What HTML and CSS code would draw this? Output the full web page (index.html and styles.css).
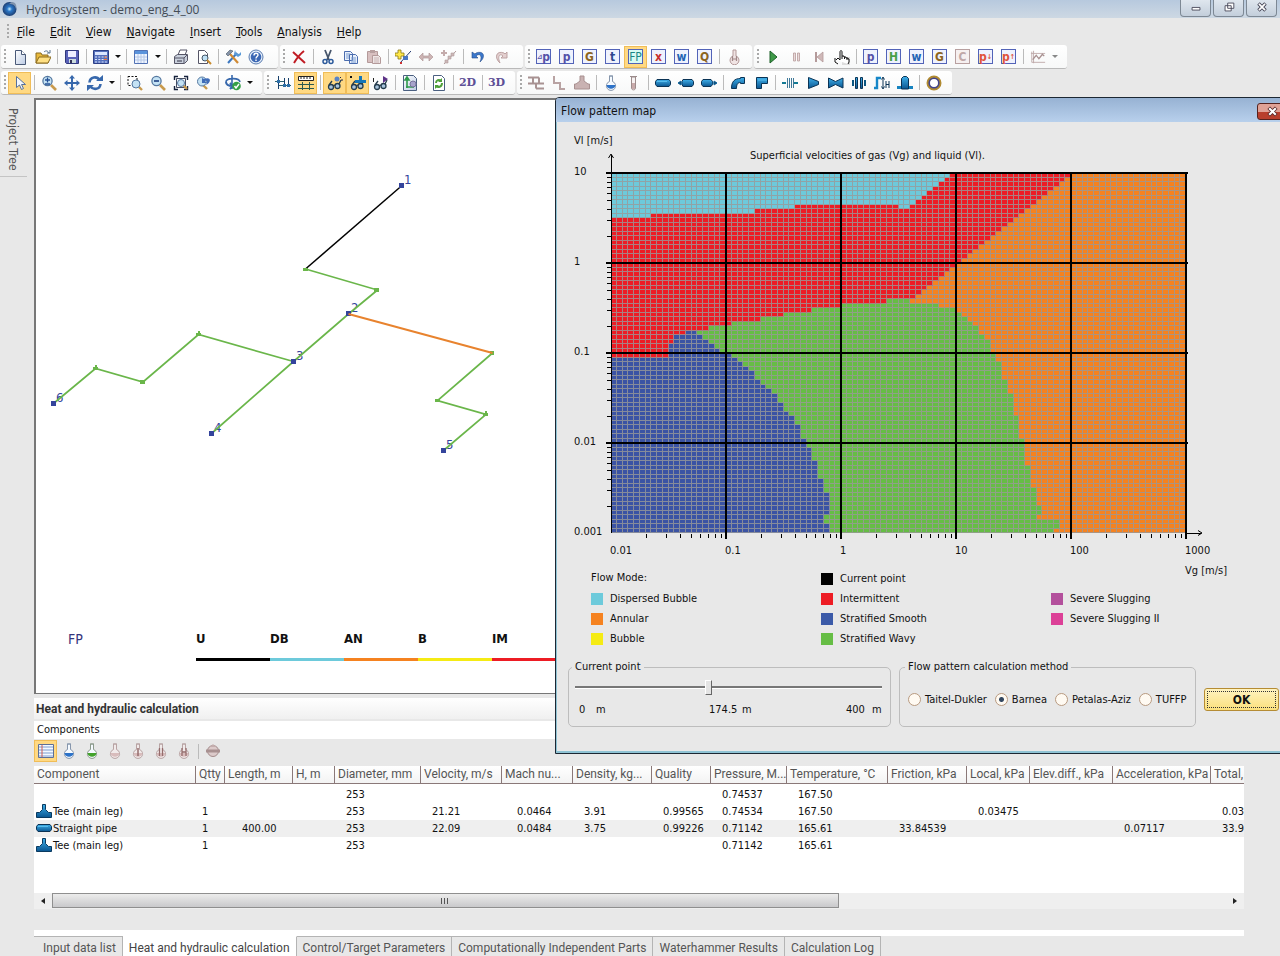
FILE: index.html
```html
<!DOCTYPE html>
<html lang="en">
<head>
    <meta charset="UTF-8">
    <meta name="viewport" content="width=device-width, initial-scale=1.0">
    <title>Hydrosystem - demo_eng_4_00</title>
    <link rel="stylesheet" href="styles.css">
</head>
<body>
    <!-- ICON SPRITE -->
    <svg class="sprite" aria-hidden="true">
        <defs>
            <linearGradient id="g-pipe" x1="0" y1="0" x2="0" y2="1"><stop offset="0" stop-color="#3fb0ea"/><stop offset="1" stop-color="#0a5590"/></linearGradient>
            <linearGradient id="g-sheet" x1="0" y1="0" x2="1" y2="1"><stop offset="0" stop-color="#ffffff"/><stop offset="1" stop-color="#bccbe4"/></linearGradient>
            <radialGradient id="g-globe"><stop offset="0" stop-color="#c8f0ff"/><stop offset=".35" stop-color="#2b78c8"/><stop offset="1" stop-color="#1d3f73"/></radialGradient>
        </defs>
        <symbol id="new" viewBox="0 0 16 16"><path d="M3.5 1.500h6l4 4v10h-10z" fill="url(#g-sheet)" stroke="#4a5a78"/><path d="M9.500 1.500v4h4" fill="#fff" stroke="#4a5a78"/></symbol>
        <symbol id="open" viewBox="0 0 16 16"><path d="M1 4h5l1 2h6v8H1z" fill="#e8b93c" stroke="#8a6a1e"/><path d="M1 14l3-6h12l-3 6z" fill="#ffe083" stroke="#8a6a1e"/><path d="M9 3c2-2 4-1 5 1m1-3v3h-3" fill="none" stroke="#54708c"/></symbol>
        <symbol id="save" viewBox="0 0 16 16"><path d="M1.500 1.500h13v13h-12l-1-1z" fill="#5a62b8" stroke="#30387c"/><path d="M4 2h8v6H4z" fill="#eef"/><path d="M5 10h7v4H5z" fill="#cdd"/><path d="M6 11h2v3H6z" fill="#335"/></symbol>
        <symbol id="calc" viewBox="0 0 16 16"><path d="M.5 1.500h15v13H.5z" fill="#5570bc" stroke="#2c3f86"/><path d="M2 3h12v3H2z" fill="#dbe6ff"/><path d="M2 8h12M2 10.500h12M2 13h12" stroke="#dbe6ff" stroke-dasharray="2 1.300"/><path d="M11 8h3M11 10.500h3" stroke="#f07840"/></symbol>
        <symbol id="grid" viewBox="0 0 16 16"><path d="M1.500 1.500h13v13h-13z" fill="#eef4ff" stroke="#5272b4"/><path d="M2 2h12v3H2z" fill="#5b94dc"/><path d="M2 8h12M2 11h12M5 5v9M8 5v9M11 5v9" stroke="#b6c8e6"/></symbol>
        <symbol id="print" viewBox="0 0 16 16"><path d="M5 6l2-5h7l-2 5" fill="#fff" stroke="#556"/><path d="M1.500 7.500l3-2h10v6l-3 3h-10z" fill="#c9d0dc" stroke="#556"/><path d="M2 9h9v5M11 9l3-3" fill="none" stroke="#556"/><path d="M4 12h5" stroke="#334"/></symbol>
        <symbol id="preview" viewBox="0 0 16 16"><path d="M2.500 1.500h6l3 3v10h-9z" fill="#fff" stroke="#556"/><circle cx="9" cy="9" r="3" fill="#bfe0f4" stroke="#456"/><path d="M11 11l4 4" stroke="#c88a2c" stroke-width="2"/></symbol>
        <symbol id="tools" viewBox="0 0 16 16"><path d="M3 14L12 4" stroke="#3c78c0" stroke-width="2"/><path d="M10 1l1 3 3 1 2-2v3l-3 2-4-3z" fill="#5a9ad8"/><path d="M5 5l8 9" stroke="#d08a34" stroke-width="2.200"/><path d="M1 5l4-4 3 1-5 5z" fill="#8794a8" stroke="#456" stroke-width=".6"/></symbol>
        <symbol id="help" viewBox="0 0 16 16"><circle cx="8" cy="8" r="7" fill="#e6effa" stroke="#5a7cb0"/><circle cx="8" cy="8" r="5.300" fill="#3c68b4"/><path d="M6 6.500c0-3 4-3 4-.5C10 7.500 8 7.500 8 9.500M8 10.500v1.500" fill="none" stroke="#fff" stroke-width="1.400"/></symbol>
        <symbol id="delete" viewBox="0 0 16 16"><path d="M2 3l12 11M13 2C9 5 6 9 3 14" fill="none" stroke="#c01c24" stroke-width="2"/></symbol>
        <symbol id="cut" viewBox="0 0 16 16"><path d="M5 1l4 10M11 1L7 11" stroke="#47566c" stroke-width="1.800"/><circle cx="5" cy="12.500" r="2" fill="none" stroke="#2c5a9c" stroke-width="1.500"/><circle cx="11" cy="12.500" r="2" fill="none" stroke="#2c5a9c" stroke-width="1.500"/></symbol>
        <symbol id="copy" viewBox="0 0 16 16"><path d="M1.500 2.500h6l2 2v7h-8zM6.500 5.500h6l2 2v7h-8z" fill="#e8f0fc" stroke="#4a6cae"/><path d="M8 9h5M8 11h5M8 13h5M3 5h4M3 7h3M3 9h3" stroke="#7a9cd0"/></symbol>
        <symbol id="paste" viewBox="0 0 16 16"><path d="M1.500 2.500h10v11h-10z" fill="#d8c0c0" stroke="#b49a9a"/><path d="M4 1h5v3H4z" fill="#b8a0a0"/><path d="M6.500 6.500h6l2 2v6h-8z" fill="#efe6e6" stroke="#b49a9a"/><path d="M8 9h5M8 11h5M8 13h5" stroke="#c8b4b4"/></symbol>
        <symbol id="addnode" viewBox="0 0 16 16"><path d="M5 14L16 2" stroke="#233a70"/><path d="M8 7h5v4H8z" fill="#4a78c4"/><path d="M3 1h3v3h3v3H6v3H3V7H0V4h3z" fill="#ffe84a" stroke="#8c7a14" stroke-width=".8"/><path d="M5 13h2v2H5z" fill="#c33"/></symbol>
        <symbol id="span" viewBox="0 0 16 16"><path d="M1 8l4-4v3h6V4l4 4-4 4V9H5v3z" fill="#cdb4b4" stroke="#b09898" stroke-width=".7"/></symbol>
        <symbol id="split" viewBox="0 0 16 16"><path d="M3 15L15 2" stroke="#b09a9a"/><path d="M7 7h3v3H7zM10 4h3v3h-3zM4 11h3v3H4z" fill="#cdb8b8" stroke="#b09a9a" stroke-width=".6"/><path d="M3 1v6M0 4h6" stroke="#c4acac" stroke-width="2"/></symbol>
        <symbol id="undo" viewBox="0 0 16 16"><path d="M2 3v6h6L6 7c3-3 7-1 4 6 6-5 4-12-4-9l-1 1z" fill="#3c78cc" stroke="#244c8c" stroke-width=".6"/></symbol>
        <symbol id="redo" viewBox="0 0 16 16"><path d="M14 3v6H8l2-2C7 4 4 7 7 14 1 9 3 1 11 4l1 1z" fill="#e4d0d0" stroke="#b89c9c" stroke-width=".9"/></symbol>
        <symbol id="thermo" viewBox="0 0 16 16"><path d="M7 1h3v6a4.500 4.500 0 1 1-3 0z" fill="#f0e4e4" stroke="#b49a9a"/><path d="M6.500 7v5M10.500 7v5M6.500 10h4" stroke="#a08888" stroke-width="1.200"/></symbol>
        <symbol id="play" viewBox="0 0 16 16"><path d="M5 2l7 6-7 6z" fill="#3f9a48" stroke="#1c6028"/></symbol>
        <symbol id="pause" viewBox="0 0 16 16"><path d="M5.500 4v8h2V4zM9.500 4v8h2V4z" fill="#eadada" stroke="#b89c9c" stroke-width=".8"/></symbol>
        <symbol id="back" viewBox="0 0 16 16"><path d="M5 3v10" stroke="#b49a9a" stroke-width="2"/><path d="M12 3v10L6 8z" fill="#cfb8b8" stroke="#b49a9a" stroke-width=".8"/></symbol>
        <symbol id="hand" viewBox="0 0 16 16"><path d="M8 8h8v8H8z" fill="#ddd"/><path d="M2 11l2-2 2 2V3c0-2 2-2 2 0v4h2v1h2v1h2v1h1v3l-1 2" fill="#fff" stroke="#111"/><path d="M1 9v4l3 2M8 7v3M10.500 8v2M13 9v2" fill="none" stroke="#111"/></symbol>
        <symbol id="chart" viewBox="0 0 18 16"><path d="M2 2v12h15M1 4h16M4 1v14" fill="none" stroke="#bda8a8"/><path d="M3 11l4-5 3 4 4-5 2 2" fill="none" stroke="#a89090" stroke-width="1.500"/></symbol>
        <symbol id="pointer" viewBox="0 0 16 16"><path d="M4.500 1.500v11l3-2.500 2 4.500 2-1-2-4h4z" fill="#f2f6fc" stroke="#56709c"/></symbol>
        <symbol id="lens" viewBox="0 0 16 16"><path d="M10 10l5 5" stroke="#c89a4c" stroke-width="2.600"/><circle cx="6.500" cy="6" r="4.600" fill="#c4e2f4" stroke="#5578a0" stroke-width="1.300"/></symbol>
        <symbol id="zoompm" viewBox="0 0 16 16"><use href="#lens"/><path d="M4 5h5M6.500 2.500v5M4 9h5" stroke="#234f94" stroke-width="1.300"/></symbol>
        <symbol id="zoomout" viewBox="0 0 16 16"><use href="#lens"/><path d="M4 6h5" stroke="#1d3f80" stroke-width="1.600"/></symbol>
        <symbol id="zoomwin" viewBox="0 0 16 16"><path d="M1 1.500h9v9H1z" fill="none" stroke="#111" stroke-dasharray="2 1.500"/><path d="M12 12l3 3" stroke="#c89a4c" stroke-width="2.400"/><circle cx="9" cy="9" r="4" fill="#c4e2f4" stroke="#5578a0"/></symbol>
        <symbol id="zoomfit" viewBox="0 0 16 16"><path d="M1.500 5V1.500H5M11 1.500h3.500V5M14.500 11v3.500H11M5 14.500H1.500V11" fill="none" stroke="#16223c" stroke-width="1.400"/><path d="M3.500 3.500h9v9h-9z" fill="none" stroke="#16223c" stroke-width=".8"/><path d="M10 10l4 4" stroke="#c89a4c" stroke-width="2.200"/><circle cx="8" cy="8" r="3.500" fill="#c4e2f4" stroke="#5578a0"/></symbol>
        <symbol id="zoomback" viewBox="0 0 16 16"><path d="M7 10l4 4" stroke="#c89a4c" stroke-width="2.400"/><circle cx="6" cy="6.500" r="4.500" fill="#c4e2f4" stroke="#5578a0"/><path d="M6 3v5h5L9 6c2-1 3 1 1 4 6-3 5-9-2-6z" fill="#3f6cb8"/></symbol>
        <symbol id="move" viewBox="0 0 16 16"><path d="M8 0l3 3.500H9V7h3.500V5L16 8l-3.500 3V9H9v3.500h2L8 16l-3-3.500h2V9H3.500v2L0 8l3.500-3v2H7V3.500H5z" fill="#3768ac"/></symbol>
        <symbol id="rotate" viewBox="0 0 16 16"><path d="M2.500 7.500C3 1.500 10 1 12.500 5M13.500 9C13 15 6 15 3.500 11.500" fill="none" stroke="#3768ac" stroke-width="2.600"/><path d="M9 6h7V0zM7 10H0v6z" fill="#3768ac"/></symbol>
        <symbol id="turn" viewBox="0 0 16 16"><path d="M7 0v14M1 7c0-4 13-5 14 0" fill="none" stroke="#3768ac" stroke-width="1.600"/><path d="M1 7c0 3 3 4 7 4M5 8l3 3-3 3" fill="none" stroke="#3768ac" stroke-width="2"/><circle cx="11.500" cy="11" r="4.300" fill="#35a047"/><path d="M9.500 11l1.500 2 3-4" fill="none" stroke="#fff" stroke-width="1.400"/></symbol>
        <symbol id="schema" viewBox="0 0 16 16"><path d="M0 6.500h9M3 10.500h13" stroke="#2c6474"/><path d="M3.500 1v13M9.500 3v8M13.500 3v8" stroke="#18406c"/><path d="M2 5h3v3H2zM8 9h3v3H8zM12 9h3v3h-3z" fill="#2b6ea8"/></symbol>
        <symbol id="ruler" viewBox="0 0 16 16"><path d="M.5 1.500h15v4H.5z" fill="#fff" stroke="#222"/><path d="M3 2v2M6 2v2M9 2v2M12 2v2" stroke="#222"/><path d="M0 9.500h16M0 13.500h16M4.500 7v8M11.500 7v8" stroke="#2c5a50"/></symbol>
        <symbol id="specs" viewBox="0 0 16 16"><circle cx="4" cy="12" r="2.500" fill="#a8c4dc" stroke="#243c4c" stroke-width="1.300"/><circle cx="10.500" cy="11" r="2.500" fill="#a8c4dc" stroke="#243c4c" stroke-width="1.300"/><path d="M2 10l3-4M12 9l2-4M6 11l2-1" stroke="#243c4c" stroke-width="1.300"/></symbol>
        <symbol id="specs1" viewBox="0 0 16 16"><use href="#specs"/><circle cx="10" cy="4" r="2.500" fill="#5b84c4"/><path d="M13 2l1 1M15 4v2" stroke="#224"/></symbol>
        <symbol id="specs2" viewBox="0 0 16 16"><use href="#specs"/><path d="M5 8V5h4V1h3v4h4v3z" fill="#1676b8"/><path d="M0 1h2v2H0z" fill="#111"/></symbol>
        <symbol id="specs3" viewBox="0 0 16 16"><use href="#specs"/><path d="M10 1v7l5-4z" fill="#5c3286"/><path d="M0 3h1v4H0z" fill="#222"/></symbol>
        <symbol id="axes" viewBox="0 0 16 16"><path d="M1.500.5h10l3 3v12h-13z" fill="url(#g-sheet)" stroke="#4a5f80"/><path d="M5 13V3M5 2l-2 3h4zM4 12h8" fill="none" stroke="#2f9a4c" stroke-width="1.600"/><circle cx="11" cy="9" r="3" fill="#a7a4cc" stroke="#77749c"/></symbol>
        <symbol id="refresh" viewBox="0 0 16 16"><path d="M2.500.5h8l3 3v12h-11z" fill="#fff" stroke="#4a5f80"/><path d="M5 8c0-3 3-4 5-2M11 8c0 4-4 5-6 3" fill="none" stroke="#4fa03a" stroke-width="2"/><path d="M11 3v4H7zM4 14v-4h4z" fill="#4fa03a"/></symbol>
        <symbol id="pipes1" viewBox="0 0 16 16"><path d="M0 2.500h11M0 8.500h5M5 2.500v6h3v5M11 2.500v6h5M8 13.500h8M8 8.500h4" fill="none" stroke="#a89292" stroke-width="2"/></symbol>
        <symbol id="pipes2" viewBox="0 0 16 16"><path d="M3 1v7h6v6h5" fill="none" stroke="#b9a3a3" stroke-width="2"/></symbol>
        <symbol id="teegrey" viewBox="0 0 16 16"><path d="M6 1h4v5l4 3h1.500v5H.5V9H2l4-3z" fill="#c9b2b2" stroke="#a89090"/></symbol>
        <symbol id="flask" viewBox="0 0 16 16"><path d="M6 1h4M6.500 1v5.500a4.600 4.600 0 1 0 3 0V1z" fill="#f5faff" stroke="#8696ac"/><path d="M3.600 10h8.800c0 5-8.800 5-8.800 0z" fill="#2c72c8"/></symbol>
        <symbol id="flaskgreen" viewBox="0 0 16 16"><path d="M6 1h4M6.500 1v5.500a4.600 4.600 0 1 0 3 0V1z" fill="#f5faff" stroke="#8c9a8c"/><path d="M3.600 10h8.800c0 5-8.800 5-8.800 0z" fill="#43a32c"/></symbol>
        <symbol id="flaskgrey" viewBox="0 0 16 16"><path d="M6 1h4M6.500 1v5.500a4.600 4.600 0 1 0 3 0V1z" fill="#f1eaea" stroke="#b8a4a4"/><path d="M3.600 10h8.800c0 5-8.800 5-8.800 0z" fill="#d8bcbc"/></symbol>
        <symbol id="flask1" viewBox="0 0 16 16"><use href="#flaskgrey"/><path d="M8 5v8" stroke="#946c6c" stroke-width="1.500"/></symbol>
        <symbol id="flask2" viewBox="0 0 16 16"><use href="#flaskgrey"/><path d="M6.500 5v8M9.500 5v8" stroke="#946c6c" stroke-width="1.300"/></symbol>
        <symbol id="flask3" viewBox="0 0 16 16"><use href="#flaskgrey"/><path d="M6 5v8M10 5v8M6 9h4" stroke="#946c6c" stroke-width="1.300"/></symbol>
        <symbol id="disc" viewBox="0 0 16 16"><circle cx="8" cy="8" r="5.500" fill="#dccaca" stroke="#a48c8c"/><path d="M1 6.500h14v3H1z" fill="#a89090"/><path d="M5 4l3-3 3 3z" fill="#c4aeae"/></symbol>
        <symbol id="tube" viewBox="0 0 16 16"><path d="M4 1.500h7M5.500 2v11c0 2.500 4 2.500 4 0V2z" fill="#f7f2f2" stroke="#9c8c8c"/><path d="M6 8h3v6H6z" fill="#c8aaaa"/></symbol>
        <symbol id="pipe" viewBox="0 0 16 16"><path d="M2 4.500h12l1.500 2v3l-1.500 2H2l-1.500-2v-3z" fill="url(#g-pipe)" stroke="#0a3355"/><path d="M2 6.500h10" stroke="#58bdec"/></symbol>
        <symbol id="pipein" viewBox="0 0 16 16"><path d="M5 4.500h9l1.500 2v3l-1.500 2H5l-1-2v-3z" fill="url(#g-pipe)" stroke="#0a3355"/><path d="M0 8h5M0 8l3-2v4z" stroke="#176ca4"/></symbol>
        <symbol id="pipeout" viewBox="0 0 16 16"><path d="M2 4.500h8l1.500 2v3l-1.500 2H2l-1.500-2v-3z" fill="url(#g-pipe)" stroke="#0a3355"/><path d="M11 8h5M16 8l-3-2v4z" stroke="#176ca4"/></symbol>
        <symbol id="bend" viewBox="0 0 16 16"><path d="M1.500 13.500c0-7 3-10 9-10v-1h4v6h-4v-1c-3 0-4 2-4 6z" fill="url(#g-pipe)" stroke="#0a3355"/></symbol>
        <symbol id="elbow" viewBox="0 0 16 16"><path d="M3.500 13.500v-11h11v6h-6v5z" fill="url(#g-pipe)" stroke="#0a3355"/><path d="M5 5h9" stroke="#58bdec"/></symbol>
        <symbol id="capacitor" viewBox="0 0 16 16"><path d="M0 8h4M12 8h4" stroke="#127a94" stroke-width="2"/><path d="M5.500 3v10M7.500 3v10M9.500 3v10M11.500 3v10" stroke="#2a6a8c" stroke-width=".9"/></symbol>
        <symbol id="cone" viewBox="0 0 16 16"><path d="M3.500 2.500l10 4v3l-10 4z" fill="url(#g-pipe)" stroke="#0a3355"/></symbol>
        <symbol id="valve" viewBox="0 0 16 16"><path d="M.5 3l7 3.500L15 3v10L7.500 9.500.5 13z" fill="url(#g-pipe)" stroke="#0a3355"/></symbol>
        <symbol id="flange" viewBox="0 0 16 16"><path d="M4.500 2.500h2v11h-2zM9.500 2.500h2v11h-2z" fill="url(#g-pipe)" stroke="#0a3355"/><path d="M2 5v6M14 5v6" stroke="#0a5580" stroke-width="2"/></symbol>
        <symbol id="height" viewBox="0 0 16 16"><path d="M0 13h3V3h4" fill="none" stroke="#1687c8" stroke-width="2.400"/><path d="M9 3v10M7.500 4.500L9 2l1.500 2.500M7.500 11.500L9 14l1.500-2.500M12 6v7M15 6v7M12 9.500h3" fill="none" stroke="#0a3355"/></symbol>
        <symbol id="pump" viewBox="0 0 16 16"><path d="M0 11h4v3H0zM12 11h4v3h-4z" fill="#1583c0"/><path d="M4.500 14V3.500l2-2h3l2 2V14z" fill="url(#g-pipe)" stroke="#0a3355"/></symbol>
        <symbol id="ring" viewBox="0 0 16 16"><circle cx="8" cy="8" r="6" fill="#fff" stroke="#b08a30" stroke-width="3"/><circle cx="8" cy="8" r="4.800" fill="none" stroke="#41438c" stroke-width="1.600"/></symbol>
        <symbol id="tee" viewBox="0 0 16 16"><path d="M6.500 1.500h3v5l3 3h3v5H.5v-5h3l3-3z" fill="url(#g-pipe)" stroke="#0a3a60"/></symbol>
        <symbol id="list" viewBox="0 0 16 16"><path d="M.5 1.500h15v13H.5z" fill="#f4f9ff" stroke="#5c6f98"/><path d="M1 4h14M1 7h14M1 10h14M1 13h14" stroke="#7c9cd0"/><path d="M4 2v12" stroke="#d05a50"/></symbol>
    </svg>

    <!-- TITLE BAR -->
    <header class="title-bar">
        <svg class="app-icon" viewBox="0 0 16 16"><circle cx="7.500" cy="8" r="7" fill="url(#g-globe)"/><path d="M10 1c4 0 5 4 4 7-1-4-3-5-7-5z" fill="#7f93ad"/></svg>
        <span class="window-title">Hydrosystem - demo_eng_4_00</span>
        <div class="window-controls">
            <button title="Minimize"><svg viewBox="0 0 16 16"><path d="M3.500 8.500h9v3h-9z" fill="#fff" stroke="#445"/></svg></button>
            <button title="Restore"><svg viewBox="0 0 16 16"><path d="M6.500 3.500h7v6h-7zM3.500 6.500h7v6h-7z" fill="#fff" stroke="#445"/></svg></button>
            <button title="Close"><svg viewBox="0 0 16 16"><path d="M4 4l8 8M12 4l-8 8" stroke="#445" stroke-width="4"/><path d="M4.500 4.500l7 7M11.500 4.500l-7 7" stroke="#fff" stroke-width="2"/></svg></button>
        </div>
    </header>

    <nav class="menu-bar">
        <i class="grip"></i>
        <a href="#"><u>F</u>ile</a>
        <a href="#"><u>E</u>dit</a>
        <a href="#"><u>V</u>iew</a>
        <a href="#"><u>N</u>avigate</a>
        <a href="#"><u>I</u>nsert</a>
        <a href="#"><u>T</u>ools</a>
        <a href="#"><u>A</u>nalysis</a>
        <a href="#"><u>H</u>elp</a>
    </nav>

    <!-- TOOLBARS -->
    <div class="toolbars">
        <div class="toolbar-row">
            <div class="tool-group wide">
                <i class="grip"></i>
                <button class="tool" title="New"><svg><use href="#new"/></svg></button>
                <button class="tool" title="Open"><svg><use href="#open"/></svg></button>
                <i class="sep"></i>
                <button class="tool" title="Save"><svg><use href="#save"/></svg></button>
                <i class="sep"></i>
                <button class="tool" title="Calculate"><svg><use href="#calc"/></svg></button>
                <button class="drop" title="Calculate options"></button>
                <i class="sep"></i>
                <button class="tool" title="Tables"><svg><use href="#grid"/></svg></button>
                <button class="drop" title="Table options"></button>
                <i class="sep"></i>
                <button class="tool" title="Print"><svg><use href="#print"/></svg></button>
                <button class="tool" title="Print preview"><svg><use href="#preview"/></svg></button>
                <i class="sep"></i>
                <button class="tool" title="Settings"><svg><use href="#tools"/></svg></button>
                <button class="tool" title="Help"><svg><use href="#help"/></svg></button>
            </div>
            <div class="tool-group wide">
                <i class="grip"></i>
                <button class="tool" title="Delete"><svg><use href="#delete"/></svg></button>
                <i class="sep"></i>
                <button class="tool" title="Cut"><svg><use href="#cut"/></svg></button>
                <button class="tool" title="Copy"><svg><use href="#copy"/></svg></button>
                <button class="tool" title="Paste"><svg><use href="#paste"/></svg></button>
                <i class="sep"></i>
                <button class="tool" title="Add node"><svg><use href="#addnode"/></svg></button>
                <button class="tool" title="Join"><svg><use href="#span"/></svg></button>
                <button class="tool" title="Split"><svg><use href="#split"/></svg></button>
                <i class="sep"></i>
                <button class="tool" title="Undo"><svg><use href="#undo"/></svg></button>
                <button class="tool" title="Redo"><svg><use href="#redo"/></svg></button>
            </div>
            <div class="tool-group">
                <i class="grip"></i>
                <button class="tool"><span class="letter violet"><small>&#8895;</small>p</span></button>
                <button class="tool"><span class="letter violet">p</span></button>
                <button class="tool"><span class="letter brown">G</span></button>
                <button class="tool"><span class="letter navy">t</span></button>
                <button class="tool active"><span class="letter teal">FP</span></button>
                <button class="tool"><span class="letter red">x</span></button>
                <button class="tool"><span class="letter blue">w</span></button>
                <button class="tool"><span class="letter brown">Q</span></button>
                <i class="sep"></i>
                <button class="tool" title="Heat"><svg><use href="#thermo"/></svg></button>
            </div>
            <div class="tool-group">
                <i class="grip"></i>
                <button class="tool" title="Play"><svg><use href="#play"/></svg></button>
                <button class="tool" title="Pause"><svg><use href="#pause"/></svg></button>
                <button class="tool" title="Back"><svg><use href="#back"/></svg></button>
                <button class="tool" title="Pick"><svg><use href="#hand"/></svg></button>
                <i class="sep"></i>
                <button class="tool"><span class="letter violet">p</span></button>
                <button class="tool"><span class="letter green">H</span></button>
                <button class="tool"><span class="letter blue">w</span></button>
                <button class="tool"><span class="letter brown">G</span></button>
                <button class="tool"><span class="letter faded">C</span></button>
                <button class="tool"><span class="letter coral">p<small>&#8595;</small></span></button>
                <button class="tool"><span class="letter coral">p<small>&#8593;</small></span></button>
                <i class="sep"></i>
                <button class="tool" title="Chart"><svg><use href="#chart"/></svg></button>
                <button class="drop off" title="Chart options"></button>
            </div>
        </div>
        <div class="toolbar-row">
            <div class="tool-group">
                <i class="grip"></i>
                <button class="tool active" title="Select"><svg><use href="#pointer"/></svg></button>
                <i class="sep"></i>
                <button class="tool" title="Zoom"><svg><use href="#zoompm"/></svg></button>
                <button class="tool" title="Pan"><svg><use href="#move"/></svg></button>
                <button class="tool" title="Rotate"><svg><use href="#rotate"/></svg></button>
                <button class="drop" title="Rotate options"></button>
                <i class="sep"></i>
                <button class="tool" title="Zoom window"><svg><use href="#zoomwin"/></svg></button>
                <button class="tool" title="Zoom out"><svg><use href="#zoomout"/></svg></button>
                <button class="tool" title="Zoom to fit"><svg><use href="#zoomfit"/></svg></button>
                <button class="tool" title="Previous zoom"><svg><use href="#zoomback"/></svg></button>
                <i class="sep"></i>
                <button class="tool" title="Turn view"><svg><use href="#turn"/></svg></button>
                <button class="drop" title="View options"></button>
            </div>
            <div class="tool-group">
                <i class="grip"></i>
                <button class="tool" title="Schema"><svg><use href="#schema"/></svg></button>
                <button class="tool active" title="Scale"><svg><use href="#ruler"/></svg></button>
                <i class="sep"></i>
                <button class="tool active" title="Show nodes"><svg><use href="#specs1"/></svg></button>
                <button class="tool active" title="Show components"><svg><use href="#specs2"/></svg></button>
                <button class="tool" title="Show flags"><svg><use href="#specs3"/></svg></button>
                <i class="sep"></i>
                <button class="tool" title="Axes"><svg><use href="#axes"/></svg></button>
                <i class="sep"></i>
                <button class="tool" title="Refresh"><svg><use href="#refresh"/></svg></button>
                <i class="sep"></i>
                <button class="tool view-mode">2D</button>
                <i class="sep"></i>
                <button class="tool view-mode">3D</button>
            </div>
            <div class="tool-group">
                <i class="grip"></i>
                <button class="tool" title="Branches"><svg><use href="#pipes1"/></svg></button>
                <button class="tool" title="Branch"><svg><use href="#pipes2"/></svg></button>
                <button class="tool" title="Tee"><svg><use href="#teegrey"/></svg></button>
                <i class="sep"></i>
                <button class="tool" title="Fluid"><svg><use href="#flask"/></svg></button>
                <button class="tool" title="Probe"><svg><use href="#tube"/></svg></button>
                <i class="sep"></i>
                <button class="tool" title="Straight pipe"><svg><use href="#pipe"/></svg></button>
                <button class="tool" title="Inlet"><svg><use href="#pipein"/></svg></button>
                <button class="tool" title="Outlet"><svg><use href="#pipeout"/></svg></button>
                <i class="sep"></i>
                <button class="tool" title="Bend"><svg><use href="#bend"/></svg></button>
                <button class="tool" title="Elbow"><svg><use href="#elbow"/></svg></button>
                <i class="sep"></i>
                <button class="tool" title="Orifice"><svg><use href="#capacitor"/></svg></button>
                <button class="tool" title="Reducer"><svg><use href="#cone"/></svg></button>
                <button class="tool" title="Valve"><svg><use href="#valve"/></svg></button>
                <button class="tool" title="Flange"><svg><use href="#flange"/></svg></button>
                <button class="tool" title="Height"><svg><use href="#height"/></svg></button>
                <button class="tool" title="Equipment"><svg><use href="#pump"/></svg></button>
                <i class="sep"></i>
                <button class="tool" title="Section"><svg><use href="#ring"/></svg></button>
            </div>
        </div>
    </div>

    <div class="workspace">
        <aside class="side-bar">
            <a href="#" class="side-tab">Project Tree</a>
        </aside>

        <main class="main-panel">
            <!-- PIPELINE SCHEME -->
            <section class="scheme">
                <svg class="network" viewBox="36 100 520 500" width="520" height="500">
                    <g class="node-names">
                        <text x="404" y="184">1</text>
                        <text x="351" y="312">2</text>
                        <text x="296" y="360">3</text>
                        <text x="214" y="432">4</text>
                        <text x="446" y="449">5</text>
                        <text x="56" y="402">6</text>
                    </g>
                    <g fill="none" stroke="#6ab64a" stroke-width="1.700">
                        <path d="M305.500 269l72 21-29 24-55 47.500-82 72"/>
                        <path d="M293.500 361.500l-95-27-55.500 47.500-47.500-13.500-42 35"/>
                        <path d="M492.500 353l-55 47.500 48.500 14-42.500 36"/>
                    </g>
                    <path d="M402 185.500L305.500 269" stroke="#000" stroke-width="1.500"/>
                    <path d="M303 268h5v3h-5zM374 288h5v4h-5zM196 333h5v3h-5zM198 331h2v3h-2zM140 380h5v4h-5zM93 367h5v3h-5zM95 365h2v3h-2zM490 351h4v4h-4zM435 399h5v3h-5zM483 413h5v3h-5zM485 411h2v3h-2z" fill="#6ab64a"/>
                    <path d="M399 183h5v5h-5zM346 311h5v5h-5zM291 359h5v5h-5zM209 431h5v5h-5zM441 448h5v5h-5zM51 401h5v5h-5z" fill="#34449c"/>
                    <path d="M348.500 314l144 39" stroke="#e8832e" stroke-width="2"/>
                </svg>
                <div class="scheme-legend">
                    <span class="mode">FP</span>
                    <span class="key">U</span>
                    <span class="key cyan">DB</span>
                    <span class="key orange">AN</span>
                    <span class="key yellow">B</span>
                    <span class="key red">IM</span>
                </div>
            </section>

            <!-- CALCULATION RESULTS -->
            <section class="results">
                <h2>Heat and hydraulic calculation</h2>
                <h3>Components</h3>
                <div class="results-tools">
                    <button class="tool active" title="List"><svg><use href="#list"/></svg></button>
                    <button class="tool" title="Fluid"><svg><use href="#flask"/></svg></button>
                    <button class="tool" title="Product"><svg><use href="#flaskgreen"/></svg></button>
                    <button class="tool" title="Fluid 0"><svg><use href="#flaskgrey"/></svg></button>
                    <button class="tool" title="Fluid 1"><svg><use href="#flask1"/></svg></button>
                    <button class="tool" title="Fluid 2"><svg><use href="#flask2"/></svg></button>
                    <button class="tool" title="Fluid 3"><svg><use href="#flask3"/></svg></button>
                    <i class="sep"></i>
                    <button class="tool" title="Section"><svg><use href="#disc"/></svg></button>
                </div>
                <div class="table-wrap">
                    <table>
                        <colgroup>
                            <col class="w-name"><col class="w-qtty"><col class="w-length"><col class="w-h"><col class="w-diam"><col class="w-vel"><col class="w-mach"><col class="w-dens"><col class="w-qual"><col class="w-press"><col class="w-temp"><col class="w-fric"><col class="w-local"><col class="w-elev"><col class="w-acc"><col class="w-total">
                        </colgroup>
                        <thead>
                            <tr><th>Component</th><th>Qtty</th><th>Length, m</th><th>H, m</th><th>Diameter, mm</th><th>Velocity, m/s</th><th>Mach nu...</th><th>Density, kg...</th><th>Quality</th><th>Pressure, M...</th><th>Temperature, °C</th><th>Friction, kPa</th><th>Local, kPa</th><th>Elev.diff., kPa</th><th>Acceleration, kPa</th><th>Total,</th></tr>
                        </thead>
                        <tbody>
                            <tr><td></td><td></td><td></td><td></td><td>253</td><td></td><td></td><td></td><td></td><td>0.74537</td><td>167.50</td><td></td><td></td><td></td><td></td><td></td></tr>
                            <tr><td><svg><use href="#tee"/></svg>Tee (main leg)</td><td>1</td><td></td><td></td><td>253</td><td>21.21</td><td>0.0464</td><td>3.91</td><td>0.99565</td><td>0.74534</td><td>167.50</td><td></td><td>0.03475</td><td></td><td></td><td>0.03475</td></tr>
                            <tr class="alt"><td><svg><use href="#pipe"/></svg>Straight pipe</td><td>1</td><td>400.00</td><td></td><td>253</td><td>22.09</td><td>0.0484</td><td>3.75</td><td>0.99226</td><td>0.71142</td><td>165.61</td><td>33.84539</td><td></td><td></td><td>0.07117</td><td>33.91656</td></tr>
                            <tr><td><svg><use href="#tee"/></svg>Tee (main leg)</td><td>1</td><td></td><td></td><td>253</td><td></td><td></td><td></td><td></td><td>0.71142</td><td>165.61</td><td></td><td></td><td></td><td></td><td></td></tr>
                        </tbody>
                    </table>
                </div>
                <div class="scroll-bar">
                    <button class="scroll-left" title="Scroll left"></button>
                    <div class="scroll-track"><div class="scroll-thumb"></div></div>
                    <button class="scroll-right" title="Scroll right"></button>
                </div>
                <nav class="tabs">
                    <a href="#">Input data list</a>
                    <a href="#" class="current">Heat and hydraulic calculation</a>
                    <a href="#">Control/Target Parameters</a>
                    <a href="#">Computationally Independent Parts</a>
                    <a href="#">Waterhammer Results</a>
                    <a href="#">Calculation Log</a>
                </nav>
            </section>
        </main>
    </div>

    <!-- FLOW PATTERN MAP WINDOW -->
    <div class="dialog" role="dialog" aria-labelledby="dialog-title">
        <div class="dialog-title">
            <span id="dialog-title">Flow pattern map</span>
            <button class="dialog-close" title="Close"><svg viewBox="0 0 16 16"><path d="M4 4l8 8M12 4l-8 8" stroke="#5a2a2a" stroke-width="4"/><path d="M4.500 4.500l7 7M11.500 4.500l-7 7" stroke="#fff" stroke-width="2.200"/></svg></button>
        </div>
        <div class="dialog-body">
            <svg class="flow-map" viewBox="0 0 680 447" width="680" height="447">
                <defs>
                    <!-- 4 x 2 cells, cell is 5.75 x 4.5 -->
                    <pattern id="cells" width="23" height="9" patternUnits="userSpaceOnUse">
                        <path d="M5 0h1v9H5zM11 0h1v9h-1zM16 0h1v9h-1zM22 0h1v9h-1zM0 4h23v1H0zM0 8h23v1H0z" fill="#999" shape-rendering="crispEdges"/>
                    </pattern>
                </defs>
                <g transform="translate(55 51)">
                    <g transform="scale(5.75 4.5)" shape-rendering="crispEdges">
                        <path fill="#f58220" d="M0 0h100v80H0z"/>
                        <path fill="#66bd45" d="M10 28H52V29H57V30H60V31H61V32H62V33H63V34H64V36H65V37H66V40H67V42H68V46H69V49H70V54H71V59H72V65H73V70H74V74H75V76H74V77H78V79H77V80H10z"/>
                        <path fill="#ed1c24" d="M0 0H80V1H79V2H78V3H77V4H76V5H75V6H74V7H73V8H72V9H71V10H70V11H69V12H68V13H67V14H66V15H65V16H64V17H63V18H62V19H61V20H60V21H59V22H58V23H57V24H56V25H55V26H54V27H53V28H48V29H40V30H35V31H30V32H26V33H21V34H17V35H15V41H0z"/>
                        <path fill="#66bd45" d="M15 35h5v5h-1V39H18V38H17V37H16V36H15z"/>
                        <path fill="#3b53a4" d="M0 41H10V38H11V36H13V35H15V36H16V37H17V38H18V39H19V40H21V41H22V42H23V43H24V44H25V46H26V47H27V48H28V49H29V51H30V53H31V54H32V56H33V59H34V61H35V64H36V68H37V71H38V76H37V78H38V80H0z"/>
                        <path fill="#6dcadb" d="M0 0H59V1H58V2H57V3H56V4H55V5H54V6H53V7H52V8H50V7H32V8H25V9H7V10H0z"/>
                    </g>
                    <rect width="575" height="360" fill="url(#cells)" opacity=".8"/>
                    <g stroke="#000" fill="none" shape-rendering="crispEdges">
                        <path stroke-width="2" d="M-5 0h582M-5 90h582M-5 180h582M-5 270h582M115 0v366M230 0v366M345 0v366M460 0v366M575 0v366"/>
                        <path d="M0-18v378M576 360h14"/>
                        <path d="M-4 63h4M-4 47h4M-4 36h4M-4 27h4M-4 20h4M-4 14h4M-4 9h4M-4 4h4M-4 153h4M-4 137h4M-4 126h4M-4 117h4M-4 110h4M-4 104h4M-4 99h4M-4 94h4M-4 243h4M-4 227h4M-4 216h4M-4 207h4M-4 200h4M-4 194h4M-4 189h4M-4 184h4M-4 333h4M-4 317h4M-4 306h4M-4 297h4M-4 290h4M-4 284h4M-4 279h4M-4 274h4"/>
                        <path d="M35 361v4M55 361v4M69 361v4M80 361v4M89 361v4M97 361v4M104 361v4M110 361v4M150 361v4M170 361v4M184 361v4M195 361v4M204 361v4M212 361v4M219 361v4M225 361v4M265 361v4M285 361v4M299 361v4M310 361v4M319 361v4M327 361v4M334 361v4M340 361v4M380 361v4M400 361v4M414 361v4M425 361v4M434 361v4M442 361v4M449 361v4M455 361v4M495 361v4M515 361v4M529 361v4M540 361v4M549 361v4M557 361v4M564 361v4M570 361v4"/>
                    </g>
                    <path d="M-2.500-15L0-19l2.500 4M587 357.500l4 2.500-4 2.500" fill="none" stroke="#000"/>
                    <g class="chart-text">
                        <text x="-37" y="-29">Vl [m/s]</text>
                        <text x="139" y="-14">Superficial velocities of gas (Vg) and liquid (Vl).</text>
                        <text x="-37" y="2">10</text>
                        <text x="-37" y="92">1</text>
                        <text x="-37" y="182">0.1</text>
                        <text x="-37" y="272">0.01</text>
                        <text x="-37" y="362">0.001</text>
                        <text x="-1" y="381">0.01</text>
                        <text x="114" y="381">0.1</text>
                        <text x="229" y="381">1</text>
                        <text x="344" y="381">10</text>
                        <text x="459" y="381">100</text>
                        <text x="574" y="381">1000</text>
                        <text x="574" y="401">Vg [m/s]</text>
                    </g>
                </g>
            </svg>

            <div class="map-legend">
                <p>Flow Mode:</p>
                <div><i class="black"></i>Current point</div>
                <div></div>
                <div><i class="cyan"></i>Dispersed Bubble</div>
                <div><i class="red"></i>Intermittent</div>
                <div><i class="purple"></i>Severe Slugging</div>
                <div><i class="orange"></i>Annular</div>
                <div><i class="blue"></i>Stratified Smooth</div>
                <div><i class="pink"></i>Severe Slugging II</div>
                <div><i class="yellow"></i>Bubble</div>
                <div><i class="green"></i>Stratified Wavy</div>
            </div>

            <form class="dialog-form" onsubmit="return false">
                <fieldset class="point-box">
                    <legend><label for="point">Current point</label></legend>
                    <input type="range" id="point" min="0" max="400" step="0.5" value="173">
                    <div class="point-scale">
                        <span>0</span><span>m</span>
                        <output for="point">174.5</output><span>m</span>
                        <span>400</span><span>m</span>
                    </div>
                </fieldset>
                <fieldset class="method-box">
                    <legend>Flow pattern calculation method</legend>
                    <label><input type="radio" name="method">Taitel-Dukler</label>
                    <label><input type="radio" name="method" checked>Barnea</label>
                    <label><input type="radio" name="method">Petalas-Aziz</label>
                    <label><input type="radio" name="method">TUFFP</label>
                </fieldset>
                <button class="ok-button">OK</button>
            </form>
        </div>
    </div>
</body>
</html>
```

FILE: styles.css
```css
:root {
    --bg: #e8e8e8;
    --text: #111;
    --line: #b4b4b4;
    --cyan: #6dcadb;
    --orange: #f58220;
    --yellow: #f5eb14;
    --red: #ed1c24;
    --blue: #3b5aa8;
    --green: #66bd45;
    --small-font: "DejaVu Sans Condensed", "Noto Sans", sans-serif;
    --ui-font: Roboto, "Noto Sans", sans-serif;
}

* { box-sizing: border-box; margin: 0; padding: 0; }

body {
    position: relative;
    display: flex;
    flex-direction: column;
    height: 100vh;
    overflow: hidden;
    background: var(--bg);
    color: var(--text);
    font-family: var(--small-font);
    font-size: 11px;
}

button { border: 0; background: none; font-family: inherit; color: inherit; }
a { color: inherit; text-decoration: none; }
.sprite { position: absolute; width: 0; height: 0; }

/* title bar */
.title-bar {
    display: flex;
    align-items: center;
    height: 18px;
    padding: 0 3px 0 2px;
    background: linear-gradient(#b7c9de, #cdd8e3);
    font-family: "Open Sans", "Noto Sans", sans-serif;
    font-size: 12px;
    color: #444c55;
}
.app-icon { width: 16px; height: 16px; margin-right: 8px; }
.window-controls { display: flex; gap: 2px; height: 18px; margin-left: auto; }
.window-controls button {
    width: 31px;
    height: 17px;
    border: 1px solid #7d8894;
    border-top: 0;
    border-radius: 0 0 4px 4px;
    background: linear-gradient(#dfe6ee, #c3cedb);
}
.window-controls svg { width: 16px; height: 14px; }

/* menu */
.menu-bar {
    display: flex;
    align-items: center;
    gap: 15px;
    height: 27px;
    padding-left: 4px;
    font-size: 12px;
}
.menu-bar .grip { margin-right: -9px; }

/* toolbars */
.toolbars { display: flex; flex-direction: column; gap: 2px; padding-left: 1px; height: 53px; }
.toolbar-row { display: flex; gap: 2px; }
.tool-group {
    display: flex;
    align-items: center;
    height: 24px;
    padding-right: 7px;
    border-bottom: 1px solid #b9b9b9;
    border-radius: 3px;
    background: linear-gradient(#fff, #f7f8f8);
}
.tool-group.wide { padding-right: 11px; }
.grip {
    flex: none;
    width: 7px;
    height: 15px;
    background: repeating-linear-gradient(#a9a9a9 0 2px, transparent 2px 4px) 3px 0 / 2px 100% no-repeat;
}
.sep { flex: none; width: 6px; height: 15px; background: linear-gradient(#bbb, #bbb) 3px 0 / 1px 100% no-repeat; }
.tool {
    display: flex;
    align-items: center;
    justify-content: center;
    flex: none;
    width: 23px;
    height: 22px;
}
.tool svg { width: 16px; height: 16px; flex: none; }
.tool.active { background: #ffd983; border: 1px solid #f0bd58; }
.drop { width: 11px; height: 22px; flex: none; }
.drop::after {
    content: "";
    display: block;
    margin: 0 auto;
    width: 0;
    border: 3px solid transparent;
    border-top-color: #111;
    border-bottom: 0;
}
.drop.off::after { border-top-color: #888; }
.view-mode { font: bold 11px "DejaVu Serif", "Liberation Serif", serif; color: #5d4f96; }
.letter {
    display: flex;
    align-items: center;
    justify-content: center;
    width: 15px;
    height: 15px;
    border: 1px solid #5263b8;
    background: #eff2fd;
    font: bold 12px/12px var(--small-font);
}
.letter small { font-size: 7px; }
.letter.violet { color: #5450a8; }
.letter.brown { color: #8c6420; }
.letter.navy { color: #2d4890; }
.letter.teal { color: #1b8585; font-weight: normal; background: #d9fbf3; }
.letter.red { color: #c8302c; }
.letter.blue { color: #2464b4; }
.letter.green { color: #48a048; }
.letter.coral { color: #e0533a; }
.letter.faded { color: #c0a8a8; border-color: #b8a0a0; background: #f6f0f0; }

/* workspace */
.workspace { display: flex; flex: 1; min-height: 0; }
.side-bar { width: 34px; flex: none; }
.side-tab {
    display: block;
    width: 27px;
    height: 79px;
    padding: 10px 6px 0 0;
    border-bottom: 1px solid #c4c4c4;
    writing-mode: vertical-rl;
    font-size: 12px;
    line-height: 16px;
    color: #555;
}
.main-panel { display: flex; flex-direction: column; flex: 1; min-width: 0; }
.scheme {
    display: flex;
    flex-direction: column;
    flex: 1;
    border: 1px solid #777;
    border-width: 2px 0 1px 2px;
    background: #fff;
    overflow: hidden;
}
.network { flex: none; }
.node-names { font: 13px var(--small-font); fill: #34449c; }
.scheme-legend { display: flex; margin-top: auto; padding: 0 0 32px 32px; }
.mode { width: 128px; font: 14px/18px var(--small-font); color: #34347c; }
.key {
    width: 74px;
    padding-bottom: 10px;
    border-bottom: 3px solid #000;
    font: bold 13px/18px var(--small-font);
}
.key.cyan { border-color: var(--cyan); }
.key.orange { border-color: var(--orange); }
.key.yellow { border-color: var(--yellow); }
.key.red { border-color: var(--red); }

/* results */
.results { margin: 4px 36px 0 0; }
.results h2 {
    height: 21px;
    padding-left: 2px;
    background: linear-gradient(#fff, #f0f0f0);
    font: bold 12px/22px var(--ui-font);
    color: #333;
}
.results h3 { height: 18px; margin-top: 2px; padding-left: 3px; background: #fff; font: 11px/18px var(--small-font); }
.results-tools { display: flex; align-items: center; height: 27px; padding-bottom: 3px; }
.table-wrap { height: 127px; overflow: hidden; background: #fff; }
table { width: 1210px; table-layout: fixed; border-collapse: separate; border-spacing: 0; }
th {
    height: 17px;
    padding: 0 0 0 3px;
    border-right: 1px solid #8a7878;
    border-bottom: 1px solid #8a7878;
    background: linear-gradient(#fff, #f3f3f3);
    font: 12px/17px var(--ui-font);
    text-align: left;
    white-space: nowrap;
    overflow: hidden;
    color: #555;
}
th:last-child { border-right: 0; }
tbody::before { content: ""; display: block; height: 2px; }
td { height: 17px; padding-left: 11px; line-height: 17px; white-space: nowrap; overflow: hidden; }
td:first-child { padding-left: 2px; }
td:nth-child(2) { padding-left: 6px; }
td:nth-child(3) { padding-left: 17px; }
td:nth-child(7) { padding-left: 15px; }
td svg { width: 16px; height: 16px; margin-right: 1px; vertical-align: top; }
.alt { background: #efefef; }
.w-name { width: 162px; }
.w-qtty { width: 29px; }
.w-length { width: 68px; }
.w-h { width: 42px; }
.w-diam { width: 86px; }
.w-vel { width: 81px; }
.w-mach { width: 71px; }
.w-dens { width: 79px; }
.w-qual { width: 59px; }
.w-press { width: 76px; }
.w-temp { width: 101px; }
.w-fric { width: 79px; }
.w-local { width: 63px; }
.w-elev { width: 83px; }
.w-acc { width: 98px; }
.w-total { width: 33px; }

.scroll-bar { display: flex; height: 16px; background: #efefef; }
.scroll-bar button { display: flex; align-items: center; justify-content: center; width: 18px; }
.scroll-left::after, .scroll-right::after { content: ""; border: 3px solid transparent; }
.scroll-left::after { border-right: 4px solid #222; border-left: 0; }
.scroll-right::after { border-left: 4px solid #222; border-right: 0; }
.scroll-track { flex: 1; }
.scroll-thumb {
    width: 67%;
    height: 15px;
    border: 1px solid #8f8f8f;
    background:
        repeating-linear-gradient(90deg, #555 0 1px, transparent 1px 3px) 50% 50% / 8px 6px no-repeat,
        linear-gradient(#ececec, #c9c9cb);
}
.tabs {
    display: flex;
    height: 26px;
    margin-top: 21px;
    border-top: 6px solid #fff;
    font: 12px/22px var(--ui-font);
    color: #555;
}
.tabs a { padding: 0 6px; border: 1px solid var(--line); border-width: 1px 1px 0 0; white-space: nowrap; }
.tabs a:first-child { padding-left: 9px; }
.tabs .current { background: #fff; border-top-color: #fff; color: #444; }

/* flow pattern map window */
.dialog {
    position: absolute;
    top: 97px;
    left: 555px;
    right: -8px;
    height: 657px;
    border: 1px solid #1c2733;
    border-top-left-radius: 4px;
    box-shadow: inset 1px -2px 0 #8fc3d4;
    background: var(--bg);
    overflow: hidden;
}
.dialog-title {
    display: flex;
    align-items: center;
    height: 24px;
    padding: 2px 0 0 5px;
    background: linear-gradient(#97b2d3, #b8d0ec);
    font: 12px var(--small-font);
}
.dialog-close {
    display: flex;
    justify-content: center;
    width: 30px;
    height: 17px;
    margin-left: auto;
    border: 1px solid #56231f;
    border-radius: 3px;
    background: linear-gradient(#e0a296 50%, #b93f2c 50%);
}
.dialog-close svg { width: 15px; height: 15px; }
.flow-map { display: block; overflow: visible; }
.chart-text { font: 11px var(--small-font); fill: var(--text); }
.map-legend { display: grid; grid-template-columns: 230px 230px 230px; padding-left: 35px; line-height: 20px; }
.map-legend p { line-height: 17px; }
.map-legend div { display: flex; align-items: center; gap: 7px; }
.map-legend i { width: 12px; height: 12px; }
.black { background: #000; }
i.cyan { background: var(--cyan); }
i.red { background: var(--red); }
i.orange { background: var(--orange); }
i.yellow { background: var(--yellow); }
i.blue { background: var(--blue); }
i.green { background: var(--green); }
.purple { background: #b3509c; }
.pink { background: #dc4097; }

.dialog-form { display: flex; gap: 8px; padding: 11px 7px 0 12px; }
fieldset { height: 67px; border: 1px solid #bdbdbd; border-radius: 5px; }
legend { margin-left: -3px; padding: 0 3px; line-height: 14px; }
.point-box { width: 323px; padding: 0 8px 0 6px; }
.point-box input {
    display: block;
    appearance: none;
    width: 100%;
    height: 15px;
    margin-top: 6px;
    background: linear-gradient(#777 0 2px, #fff 2px 3px) 0 6px / 100% 3px no-repeat;
}
.point-box input::-webkit-slider-thumb {
    appearance: none;
    width: 7px;
    height: 15px;
    border: 1px solid #fff;
    border-right-color: #666;
    border-bottom-color: #666;
    background: #e4e4e4;
}
.point-scale { display: grid; grid-template-columns: 17px 113px 33px 104px 26px 10px; padding: 7px 0 0 4px; line-height: 16px; }
.method-box { display: flex; width: 297px; padding: 12px 0 0 8px; gap: 8px; }
.method-box label { display: flex; align-items: center; gap: 4px; height: 26px; white-space: nowrap; }
.method-box input {
    appearance: none;
    width: 13px;
    height: 13px;
    border: 1px solid #b89a80;
    border-radius: 50%;
    background: #fffaf2;
}
.method-box input:checked { background: radial-gradient(circle, #33475f 0 2px, #fffaf2 3px); }
.ok-button {
    align-self: flex-end;
    width: 75px;
    height: 23px;
    margin-bottom: 16px;
    border: 1px solid #b58c34;
    border-radius: 3px;
    outline: 1px dotted #333;
    outline-offset: -4px;
    background: linear-gradient(#fff3c0, #fbe07c);
    font: bold 12px var(--small-font);
}
```
